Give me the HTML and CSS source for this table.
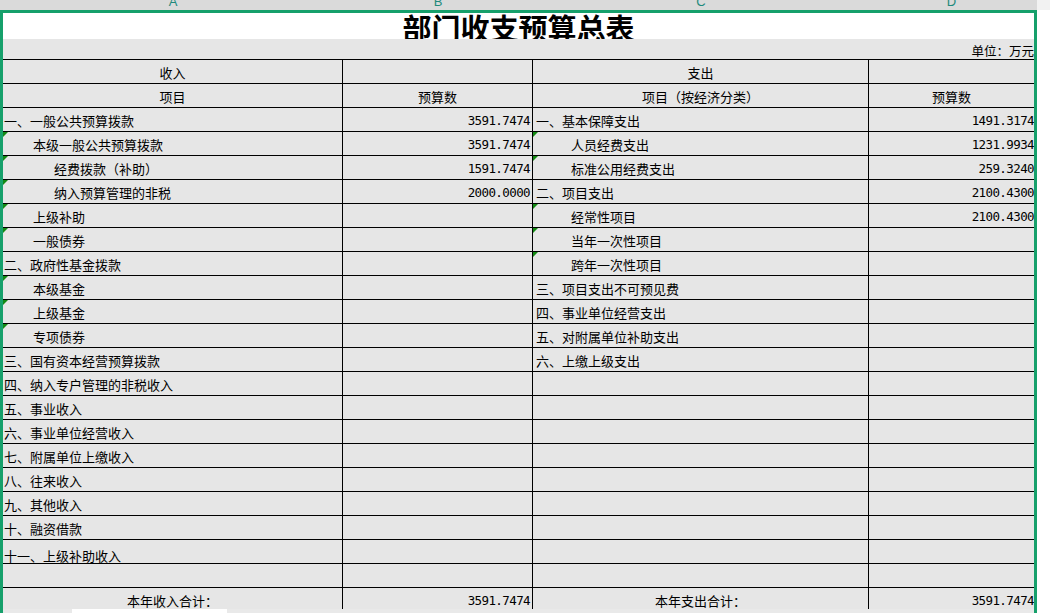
FILE: index.html
```html
<!DOCTYPE html>
<html lang="zh-CN">
<head>
<meta charset="utf-8">
<title>部门收支预算总表</title>
<link rel="stylesheet" href="styles.css">
</head>
<body>
<div class="colbar">
  <div class="colhead">
    <div class="ch wa">A</div>
    <div class="ch wb">B</div>
    <div class="ch wc">C</div>
    <div class="ch wd">D</div>
  </div>
</div>
<div class="sheet">
  <div class="view">
    <div class="title">部门收支预算总表</div>
    <div class="unit">单位：万元</div>
    <div class="grid">
      <div class="cell c">收入</div><div class="cell"></div><div class="cell c">支出</div><div class="cell"></div>
      <div class="cell c">项目</div><div class="cell c">预算数</div><div class="cell c">项目（按经济分类）</div><div class="cell c">预算数</div>

      <div class="cell l0">一、一般公共预算拨款</div><div class="cell num">3591.7474</div><div class="cell r0">一、基本保障支出</div><div class="cell num end">1491.3174</div>
      <div class="cell l1 tri">本级一般公共预算拨款</div><div class="cell num">3591.7474</div><div class="cell r1 tri">人员经费支出</div><div class="cell num end">1231.9934</div>
      <div class="cell l2 tri">经费拨款（补助）</div><div class="cell num">1591.7474</div><div class="cell r1 tri">标准公用经费支出</div><div class="cell num end">259.3240</div>
      <div class="cell l2 tri">纳入预算管理的非税</div><div class="cell num">2000.0000</div><div class="cell r0">二、项目支出</div><div class="cell num end">2100.4300</div>
      <div class="cell l1 tri">上级补助</div><div class="cell"></div><div class="cell r1 tri">经常性项目</div><div class="cell num end">2100.4300</div>
      <div class="cell l1 tri">一般债券</div><div class="cell"></div><div class="cell r1 tri">当年一次性项目</div><div class="cell"></div>
      <div class="cell l0">二、政府性基金拨款</div><div class="cell"></div><div class="cell r1 tri">跨年一次性项目</div><div class="cell"></div>
      <div class="cell l1 tri">本级基金</div><div class="cell"></div><div class="cell r0">三、项目支出不可预见费</div><div class="cell"></div>
      <div class="cell l1 tri">上级基金</div><div class="cell"></div><div class="cell r0">四、事业单位经营支出</div><div class="cell"></div>
      <div class="cell l1 tri">专项债券</div><div class="cell"></div><div class="cell r0">五、对附属单位补助支出</div><div class="cell"></div>
      <div class="cell l0">三、国有资本经营预算拨款</div><div class="cell"></div><div class="cell r0">六、上缴上级支出</div><div class="cell"></div>
      <div class="cell l0">四、纳入专户管理的非税收入</div><div class="cell"></div><div class="cell"></div><div class="cell"></div>
      <div class="cell l0">五、事业收入</div><div class="cell"></div><div class="cell"></div><div class="cell"></div>
      <div class="cell l0">六、事业单位经营收入</div><div class="cell"></div><div class="cell"></div><div class="cell"></div>
      <div class="cell l0">七、附属单位上缴收入</div><div class="cell"></div><div class="cell"></div><div class="cell"></div>
      <div class="cell l0">八、往来收入</div><div class="cell"></div><div class="cell"></div><div class="cell"></div>
      <div class="cell l0">九、其他收入</div><div class="cell"></div><div class="cell"></div><div class="cell"></div>
      <div class="cell l0">十、融资借款</div><div class="cell"></div><div class="cell"></div><div class="cell"></div>
      <div class="cell l0 bot">十一、上级补助收入</div><div class="cell"></div><div class="cell"></div><div class="cell"></div>
      <div class="cell"></div><div class="cell"></div><div class="cell"></div><div class="cell"></div>
      <div class="cell c">本年收入合计：</div><div class="cell num">3591.7474</div><div class="cell c">本年支出合计：</div><div class="cell num end">3591.7474</div>
    </div>
  </div>
  <div class="tabs"><div class="tab"></div></div>
</div>
</body>
</html>
```

FILE: styles.css
```css
* { box-sizing: border-box; }

html, body {
  margin: 0;
  padding: 0;
  background: #ffffff;
  width: 1050px;
  height: 613px;
  overflow: hidden;
  font-family: "Noto Sans CJK SC", "Noto Sans", sans-serif;
  color: #000;
}

.colbar {
  height: 10px;
  width: 1050px;
  background: #f2f2f2;
}

.colhead {
  display: flex;
  width: 1037px;
  height: 10px;
  padding-left: 3px;
  background: #dadada;
  overflow: hidden;
}

.ch {
  display: flex;
  justify-content: center;
  align-items: flex-end;
  height: 10px;
  padding-bottom: 1px;
  font-family: "Liberation Sans", Arial, sans-serif;
  font-size: 13px;
  line-height: 14px;
  color: #1f8a7c;
}

.wa { width: 340px; }
.wb { width: 190px; }
.wc { width: 336px; }
.wd { width: 165px; }

.sheet {
  width: 1037px;
  height: 603px;
  border-top: 3px solid #16a06b;
  border-left: 3px solid #16a06b;
  border-right: 3px solid #16a06b;
  display: flex;
  flex-direction: column;
}

.view {
  height: 596px;
  overflow: hidden;
  display: flex;
  flex-direction: column;
}

.title {
  height: 26px;
  flex: none;
  background: #ffffff;
  text-align: center;
  font-size: 29px;
  line-height: 28px;
  font-weight: 700;
  overflow: hidden;
}

.unit {
  height: 20px;
  flex: none;
  background: #e6e6e6;
  display: flex;
  justify-content: flex-end;
  align-items: flex-end;
  font-size: 12.5px;
  line-height: 14px;
  padding-bottom: 1px;
}

.grid {
  display: grid;
  grid-template-columns: 340px 190px 336px 165px;
  grid-auto-rows: 24px;
  background: #e6e6e6;
  flex: none;
}

.cell {
  position: relative;
  display: flex;
  align-items: center;
  border-top: 1px solid #000;
  border-right: 1px solid #000;
  padding-top: 2px;
  font-size: 13px;
  line-height: 1;
  white-space: nowrap;
  overflow: hidden;
}

.cell:nth-child(4n) { border-right: none; }

.c { justify-content: center; }

.l0 { padding-left: 1px; }
.l1 { padding-left: 30px; }
.l2 { padding-left: 51px; }
.r0 { padding-left: 3px; }
.r1 { padding-left: 38px; }

.bot {
  align-items: flex-end;
  padding-top: 0;
  padding-bottom: 1px;
}

.num {
  justify-content: flex-end;
  padding-top: 3px;
  padding-right: 2px;
  font-family: "DejaVu Sans Mono", "Liberation Mono", monospace;
  font-size: 12.5px;
  letter-spacing: -0.6px;
}

.num.end { padding-right: 0; }

.tri::before {
  content: "";
  position: absolute;
  left: 0;
  top: 0;
  width: 0;
  height: 0;
  border-top: 5px solid #138a13;
  border-right: 5px solid transparent;
}

.tabs {
  height: 4px;
  flex: none;
  background: #e9e9e9;
  padding-left: 69px;
}

.tab {
  width: 155px;
  height: 4px;
  background: #ffffff;
}
```
